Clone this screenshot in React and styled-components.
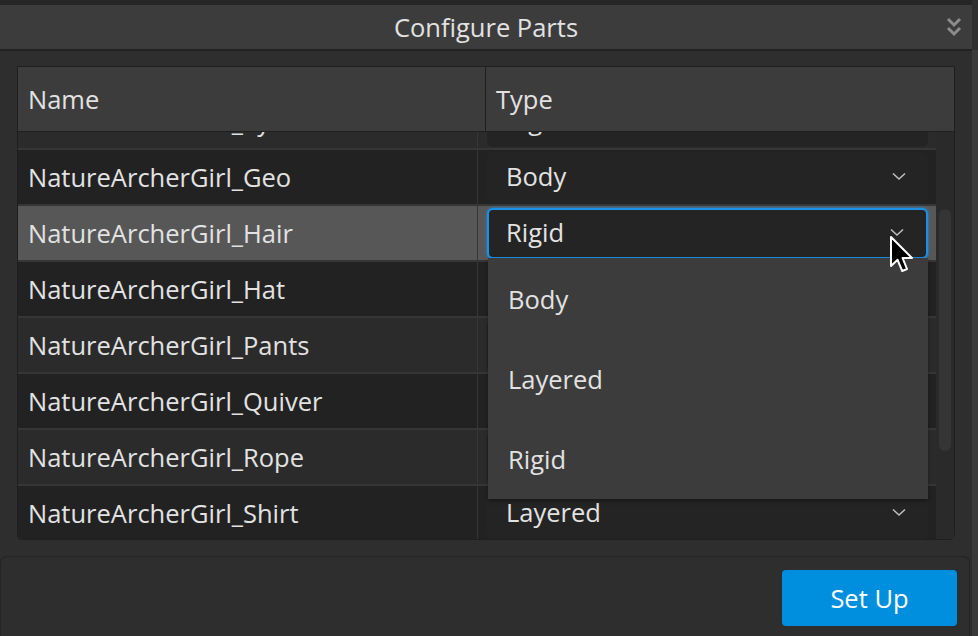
import React from 'react'
import styled, { createGlobalStyle } from 'styled-components'

const Global = createGlobalStyle`
  html, body {
    margin: 0;
    padding: 0;
    background: #2e2e2e;
    overflow: hidden;
  }
  * { box-sizing: border-box; }
`;

const Window = styled.div`
  display: flex;
  width: 978px;
  height: 636px;
  font-family: "Open Sans", "Noto Sans", sans-serif;
  font-size: 25.5px;
  color: #e2e2e2;
  background: #2e2e2e;
  position: relative;
`;

const Main = styled.div`
  flex: 1;
  display: flex;
  flex-direction: column;
  min-width: 0;
`;

const SideStrip = styled.div`
  width: 6px;
  display: flex;
  flex-direction: column;
  background: #3a3a3a;
  border-top: 50px solid #2f2f2f;
`;

const TopStrip = styled.div`
  height: 5px;
  background: #262626;
`;

const TitleBar = styled.div`
  height: 46px;
  display: flex;
  align-items: center;
  justify-content: center;
  position: relative;
  background: #3c3c3c;
  border-bottom: 2px solid #222;
`;

const TitleText = styled.span`
  line-height: 1;
  margin-top: 2px;
`;

const Collapse = styled.svg`
  position: absolute;
  right: 10px;
  top: 12px;
`;

const Content = styled.div`
  padding: 15px 17px 16px 17px;
`;

const Table = styled.div`
  position: relative;
  height: 474px;
  display: flex;
  flex-direction: column;
  border: 1px solid #1f1f1f;
  border-radius: 0 0 5px 5px;
  background: #2a2a2a;
`;

const Header = styled.div`
  display: flex;
  height: 65px;
  background: #3c3c3c;
  border-bottom: 1px solid #1f1f1f;
`;

const HeadCell = styled.div`
  display: flex;
  align-items: center;
  padding-left: 10px;
  width: ${p => p.$width || 'auto'};
  flex: ${p => (p.$width ? 'none' : 1)};
  border-right: ${p => (p.$divider ? '1px solid #1f1f1f' : 'none')};
`;

const Body = styled.div`
  flex: 1;
  display: flex;
  min-height: 0;
`;

const Viewport = styled.div`
  flex: 1;
  overflow: hidden;
`;

const RowList = styled.div`
  margin-top: -40px;
`;

const Row = styled.div`
  display: flex;
  height: 56px;
  border-top: 2px solid #363636;
  background: ${p => (p.$selected ? '#575757' : p.$light ? '#2b2b2b' : '#222222')};
`;

const NameCell = styled.div`
  width: 460px;
  display: flex;
  align-items: center;
  padding-left: 10px;
  border-right: 1px solid #363636;
  white-space: nowrap;
  overflow: hidden;
`;

const TypeCell = styled.div`
  flex: 1;
  padding: 2px 8px 1px 9px;
  display: flex;
`;

const Dropdown = styled.div`
  flex: 1;
  display: flex;
  align-items: center;
  justify-content: space-between;
  padding: 0 22px 4px ${p => (p.$focused ? '17px' : '19px')};
  border-radius: 6px;
  background: #242424;
  border: ${p => (p.$focused ? '2px solid #1a90e6' : 'none')};
  box-shadow: ${p => (p.$focused ? '0 0 3px #1a90e6' : 'none')};

  svg {
    margin-top: 2px;
  }
`;

const Track = styled.div`
  width: 18px;
  padding: 77px 3px 0 3px;
  background: #2a2a2a;
`;

const Thumb = styled.div`
  height: 242px;
  border-radius: 6px;
  background: #353535;
`;

const Menu = styled.div`
  position: absolute;
  left: 470px;
  top: 191px;
  width: 440px;
  padding-top: 1px;
  background: #3c3c3c;
  box-shadow: 0 2px 4px rgba(0, 0, 0, 0.35);
`;

const MenuItem = styled.div`
  height: 80px;
  display: flex;
  align-items: center;
  padding-left: 20px;
`;

const Footer = styled.div`
  flex: 1;
  display: flex;
  justify-content: flex-end;
  align-items: flex-start;
  margin-right: 2px;
  padding: 13px 12px 0 0;
  border-top: 1px solid #242424;
  border-left: 1px solid #242424;
  border-right: 1px solid #242424;
  border-radius: 7px 7px 0 0;
  background: #2e2e2e;
`;

const Button = styled.button`
  width: 175px;
  height: 56px;
  border: none;
  border-radius: 4px;
  background: #008fdf;
  color: #fff;
  font-family: inherit;
  font-size: 25.5px;
  padding: 0;
`;

const Cursor = styled.svg`
  position: absolute;
  left: 889px;
  top: 235px;
`;

function Chevron() {
  return (
    <svg width="14" height="9" viewBox="0 0 14 9">
      <path d="M1 1.5 L7 7 L13 1.5" fill="none" stroke="#bdbdbd" strokeWidth="1.6" />
    </svg>
  )
}

const parts = [
  { name: 'NatureArcherGirl_Eyes', type: 'Rigid' },
  { name: 'NatureArcherGirl_Geo', type: 'Body' },
  { name: 'NatureArcherGirl_Hair', type: 'Rigid', selected: true },
  { name: 'NatureArcherGirl_Hat', type: 'Rigid' },
  { name: 'NatureArcherGirl_Pants', type: 'Layered' },
  { name: 'NatureArcherGirl_Quiver', type: 'Rigid' },
  { name: 'NatureArcherGirl_Rope', type: 'Rigid' },
  { name: 'NatureArcherGirl_Shirt', type: 'Layered' },
]

export default function App() {
  return (
    <>
      <Global />
      <Window>
        <Main>
          <TopStrip />
          <TitleBar>
            <TitleText>Configure Parts</TitleText>
            <Collapse width="16" height="22" viewBox="0 0 16 22">
              <path d="M2 2 L8 8 L14 2" fill="none" stroke="#8c8c8c" strokeWidth="3" />
              <path d="M2 11 L8 17 L14 11" fill="none" stroke="#8c8c8c" strokeWidth="3" />
            </Collapse>
          </TitleBar>
          <Content>
            <Table>
              <Header>
                <HeadCell $width="468px" $divider>Name</HeadCell>
                <HeadCell>Type</HeadCell>
              </Header>
              <Body>
                <Viewport>
                  <RowList>
                    {parts.map((p, i) => (
                      <Row key={p.name} $light={i % 2 === 0} $selected={p.selected}>
                        <NameCell>{p.name}</NameCell>
                        <TypeCell>
                          <Dropdown $focused={p.selected}>
                            <span>{p.type}</span>
                            <Chevron />
                          </Dropdown>
                        </TypeCell>
                      </Row>
                    ))}
                  </RowList>
                </Viewport>
                <Track>
                  <Thumb />
                </Track>
              </Body>
              <Menu>
                <MenuItem>Body</MenuItem>
                <MenuItem>Layered</MenuItem>
                <MenuItem>Rigid</MenuItem>
              </Menu>
            </Table>
          </Content>
          <Footer>
            <Button>Set Up</Button>
          </Footer>
        </Main>
        <SideStrip />
        <Cursor width="26" height="40" viewBox="0 0 13 20">
          <path
            d="M1 1 L1 15.5 L4.3 12.4 L6.6 18 L9 17 L6.8 11.5 L11.5 11.5 Z"
            fill="#000"
            stroke="#fff"
            strokeWidth="1"
            strokeLinejoin="round"
          />
        </Cursor>
      </Window>
    </>
  )
}
